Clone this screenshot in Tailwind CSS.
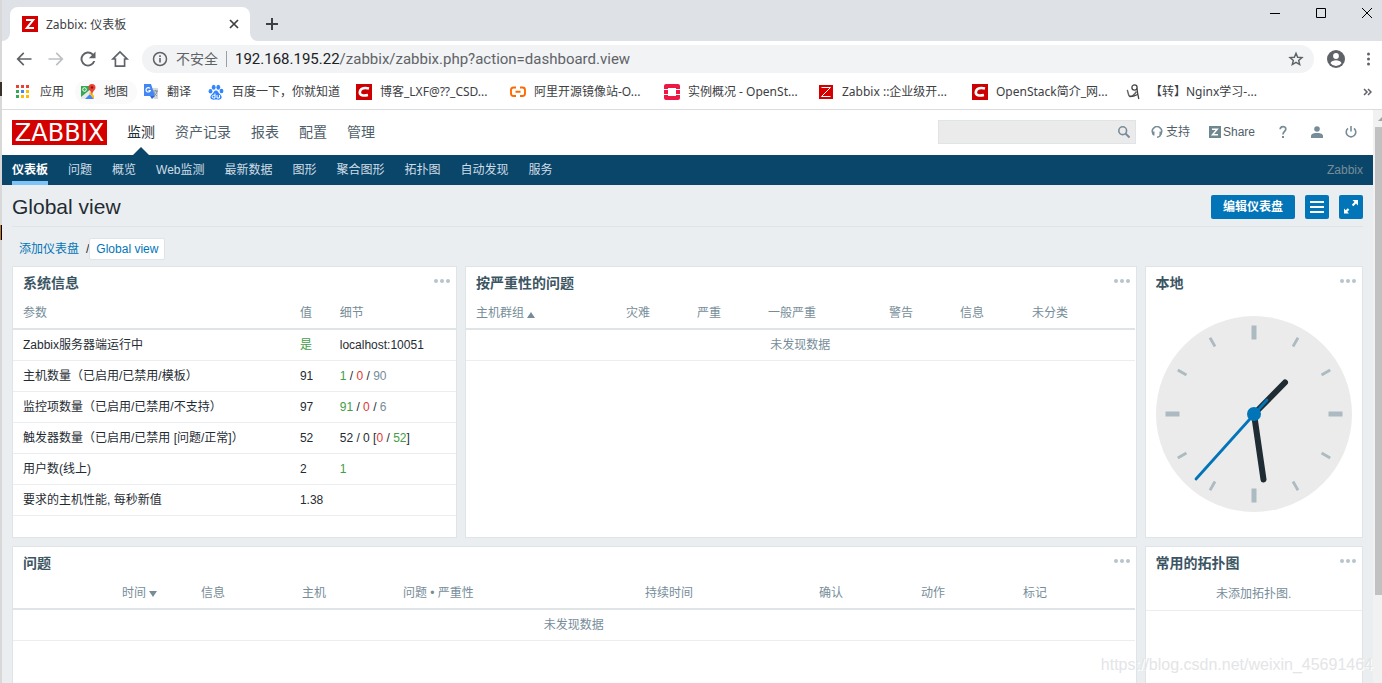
<!DOCTYPE html>
<html lang="zh-CN">
<head>
<meta charset="utf-8">
<meta name="viewport" content="width=device-width, initial-scale=1">
<title>Zabbix: 仪表板</title>
<script src="https://cdn.jsdelivr.net/npm/@tailwindcss/browser@4"></script>
</head>
<body class="relative flex h-screen overflow-hidden bg-white font-['Liberation_Sans','Noto_Sans_CJK_SC',sans-serif] text-xs text-[#1f2c33]">
<div class="relative w-[2px] shrink-0 bg-[#d8d8d8]">
  <span class="absolute top-[82px] left-0 h-[14px] w-[2px] bg-[#3a3128]"></span>
  <span class="absolute top-[225px] left-0 h-[15px] w-[2px] border-r border-black bg-[#c07a2c]"></span>
</div>
<div class="flex min-w-0 flex-1 flex-col">

  <!-- Browser window -->
  <section class="shrink-0 font-['Noto_Sans','Noto_Sans_CJK_SC',sans-serif] text-[#3c4043]">
    <div class="flex h-[41px] items-end bg-[#dee1e6]">
      <div class="flex h-8 w-2 items-end bg-white"><span class="h-full w-full rounded-br-lg bg-[#dee1e6]"></span></div>
      <div class="flex h-[34px] w-60 items-center rounded-t-lg bg-white pr-[10px] pl-3">
        <svg class="size-4" viewBox="0 0 16 16"><path fill="#d40000" d="M0 0h16v16H0z"/><path d="M4 4h7.200L4.800 12H12" fill="none" stroke="#fff" stroke-width="2"/></svg>
        <span class="ml-2 flex-1 pt-px">Zabbix: 仪表板</span>
        <button aria-label="关闭标签页" class="flex size-3 items-center justify-center"><svg class="size-[10px]" viewBox="0 0 10 10"><path d="M1 1l8 8M9 1L1 9" stroke="#3c4043" stroke-width="1.700"/></svg></button>
      </div>
      <div class="flex h-8 w-2 bg-white"><span class="h-full w-full rounded-bl-lg bg-[#dee1e6]"></span></div>
      <button aria-label="新标签页" class="mb-[11px] ml-2 size-3"><svg class="size-3" viewBox="0 0 12 12"><path d="M6 0v12M0 6h12" stroke="#3c4043" stroke-width="2"/></svg></button>
      <div class="mb-[23px] ml-auto flex items-center gap-9 pr-[10px]">
        <button aria-label="最小化"><svg class="size-[10px]" viewBox="0 0 10 10"><path d="M0 5.500h10" stroke="#000"/></svg></button>
        <button aria-label="最大化"><svg class="size-[10px]" viewBox="0 0 10 10"><path d="M.5.5h9v9h-9z" fill="none" stroke="#000"/></svg></button>
        <button aria-label="关闭"><svg class="size-[10px]" viewBox="0 0 10 10"><path d="M0 0l10 10M10 0L0 10" stroke="#000"/></svg></button>
      </div>
    </div>
    <div class="flex h-9 items-center pl-3">
      <div class="flex gap-3 text-[#5f6368]">
        <button aria-label="后退"><svg class="size-5" viewBox="0 0 24 24"><path fill="currentColor" d="M21 11H6.800l5.600-5.600L11 4l-8 8 8 8 1.400-1.400L6.800 13H21z"/></svg></button>
        <button aria-label="前进" class="text-[#bdc0c3]"><svg class="size-5" viewBox="0 0 24 24"><path fill="currentColor" d="M3 11h14.200l-5.600-5.600L13 4l8 8-8 8-1.400-1.400 5.600-5.600H3z"/></svg></button>
        <button aria-label="重新加载"><svg class="size-5" viewBox="0 0 24 24"><path fill="currentColor" d="M18.400 5.600A9 9 0 1 0 20.700 14.500h-2.400a6.700 6.700 0 1 1-1.500-7.200L13 11h8V3z"/></svg></button>
        <button aria-label="主页"><svg class="size-5" viewBox="0 0 24 24"><path d="M12 3.500L3.500 12H6.500v8.500h11V12h3z" fill="none" stroke="currentColor" stroke-width="2"/></svg></button>
      </div>
      <div class="ml-3 flex h-7 flex-1 items-center rounded-full bg-[#f1f3f4] px-[10px] text-sm text-[#5f6368]">
        <svg class="size-4" viewBox="0 0 16 16"><circle cx="8" cy="8" r="6.500" fill="none" stroke="#5f6368" stroke-width="1.500"/><path d="M8 7v4.500M8 4.300v1.600" stroke="#5f6368" stroke-width="1.600"/></svg>
        <span class="ml-2">不安全</span>
        <span class="mx-2 h-4 w-px bg-[#9aa0a6]"></span>
        <span class="relative flex-1 font-[Roboto,sans-serif] text-[15px] leading-5 whitespace-nowrap"><span class="text-[#202124]">192.168.195.22</span>/zabbix/zabbix.php?action=dashboard.view<input aria-label="地址" class="absolute inset-0 w-full opacity-0"></span>
        <button aria-label="收藏"><svg class="size-4" viewBox="0 0 24 24"><path d="M12 3.500l2.500 5.900 6.400.5-4.900 4.200 1.500 6.200L12 17l-5.500 3.300L8 14.100 3.100 9.900l6.400-.5z" fill="none" stroke="#5f6368" stroke-width="2.200"/></svg></button>
      </div>
      <button aria-label="用户" class="ml-[13px]"><svg class="size-[18px]" viewBox="0 0 18 18"><circle cx="9" cy="9" r="9" fill="#5f6368"/><circle cx="9" cy="6" r="2.900" fill="#fff"/><path d="M3.500 13.200c.6-2 3.300-2.900 5.500-2.900s4.900.9 5.500 2.900A6.800 6.800 0 0 1 9 16a6.800 6.800 0 0 1-5.500-2.800z" fill="#fff"/></svg></button>
      <button aria-label="菜单" class="ml-[22px] pr-3"><svg class="h-4 w-[3px]" viewBox="0 0 3 16"><g fill="#5f6368"><circle cx="1.500" cy="3" r="1.500"/><circle cx="1.500" cy="8" r="1.500"/><circle cx="1.500" cy="13" r="1.500"/></g></svg></button>
    </div>
    <nav class="flex h-[33px] items-center border-b border-[#dadce0] pb-[3px] text-xs whitespace-nowrap">
      <a href="#" class="flex w-[73px] items-center gap-[10px] pl-[14px]"><svg class="size-[14px]" viewBox="0 0 14 14"><path fill="#ea4335" d="M0 0h3v3H0zM5 0h3v3H5zM10 0h3v3h-3z"/><path fill="#34a853" d="M0 5h3v3H0zM0 10h3v3H0z"/><path fill="#4285f4" d="M5 5h3v3H5z"/><path fill="#fbbc05" d="M10 5h3v3h-3zM5 10h3v3H5zM10 10h3v3h-3z"/></svg>应用</a>
      <a href="#" class="flex w-[62px] items-center gap-2 rounded-full bg-[#fafafa] py-1 pl-[5px]"><svg class="size-4" viewBox="0 0 16 16"><path fill="#34a853" d="M1 2h9v6l-9 7z"/><path fill="#4285f4" d="M1 15l7-7 6 7z"/><path fill="#e8eaed" d="M1 13L12 4l2 2-9 9H1z"/><path fill="#fbbc05" d="M9 9l2-1 3 4v3z"/><circle cx="4.500" cy="5.500" r="1.800" fill="none" stroke="#fff"/><path fill="#ea4335" d="M12 0a3.500 3.500 0 0 1 3.500 3.500C15.500 6 12.500 7 12 11c-.5-4-3.500-5-3.500-7.500A3.500 3.500 0 0 1 12 0z"/><circle cx="12" cy="3.500" r="1.200" fill="#811"/></svg>地图</a>
      <a href="#" class="flex w-[65px] items-center gap-2 pl-[6px]"><svg class="size-4" viewBox="0 0 16 16"><path fill="#d5d8dc" d="M6 4h9v11h-4z"/><path fill="#4285f4" d="M1 0h7l4 12H1z"/><path fill="#3367d6" d="M7 12h5l-3 3z"/><path d="M7 4.500A2.200 2.200 0 1 0 7.300 6.500H5.500" fill="none" stroke="#fff" stroke-width="1.200"/><path d="M10 7h5M12.500 6v1M14 7c-.5 3-2 4-3 5M11 8c.5 2 2 3.500 3 4" fill="none" stroke="#78909c"/></svg>翻译</a>
      <a href="#" class="flex w-[148px] items-center gap-2 pl-[6px]"><svg class="size-4 shrink-0" viewBox="0 0 16 16"><g fill="#3385ff"><ellipse cx="2.500" cy="7.300" rx="1.900" ry="2.300"/><ellipse cx="5.700" cy="3.200" rx="1.900" ry="2.500"/><ellipse cx="10.300" cy="3.200" rx="1.900" ry="2.500"/><ellipse cx="13.500" cy="7" rx="1.900" ry="2.300"/><path d="M8 6.500c2 0 2.300 2 3.500 3.200 1.500 1.300 2.500 2.300 2 4.300-.6 2-3 1.700-5.500 1.500-2.500.2-5 .5-5.500-1.500s.5-3 2-4.300C5.700 8.500 6 6.500 8 6.500z"/></g><path d="M7 9.500V14H5.500a1.300 1.300 0 0 1 0-2.700H7M9 11v3h2.500v-3" fill="none" stroke="#fff"/></svg>百度一下，你就知道</a>
      <a href="#" class="flex w-[154px] items-center gap-2 pl-[6px]"><svg class="size-4 shrink-0" viewBox="0 0 16 16"><path fill="#c00" d="M0 0h16v16H0z"/><path d="M13 4.500C7 3 4 5 3.800 8.500c0 3 3.500 3.500 8.200 2.500" fill="none" stroke="#fff" stroke-width="2.600"/></svg>博客_LXF@??_CSD...</a>
      <a href="#" class="flex w-[154px] items-center gap-2 pl-[6px]"><svg class="size-4 shrink-0" viewBox="0 0 16 16"><path d="M6 3.500H3.500Q1 3.500 1 6v3.500Q1 12 3.500 12H6M10 3.500h2.500Q15 3.500 15 6v3.500Q15 12 12.500 12H10M5.500 7.800h5" fill="none" stroke="#ff6a00" stroke-width="1.900"/></svg>阿里开源镜像站-O...</a>
      <a href="#" class="flex w-[154px] items-center gap-2 pl-[6px]"><svg class="size-4 shrink-0" viewBox="0 0 16 16"><path fill="#ed1944" d="M2 0h12q2 0 2 2v3h-4V4H4v1H0V2q0-2 2-2zM0 6h4v4H0zM12 6h4v4h-4zM0 11h4v1h8v-1h4v3q0 2-2 2H2q-2 0-2-2z"/></svg>实例概况 - OpenSt...</a>
      <a href="#" class="flex w-[154px] items-center gap-2 pl-[6px]"><svg class="size-4 shrink-0" viewBox="0 0 16 16"><path fill="#d40000" d="M1 1h14v14H1z"/><path d="M3.500 3.500h9l-9 9h9" fill="none" stroke="#fff"/></svg>Zabbix ::企业级开...</a>
      <a href="#" class="flex w-[154px] items-center gap-2 pl-[6px]"><svg class="size-4 shrink-0" viewBox="0 0 16 16"><path fill="#c00" d="M0 0h16v16H0z"/><path d="M13 4.500C7 3 4 5 3.800 8.500c0 3 3.500 3.500 8.200 2.500" fill="none" stroke="#fff" stroke-width="2.600"/></svg>OpenStack简介_网...</a>
      <a href="#" class="flex items-center gap-2 pl-[6px]"><svg class="size-4 shrink-0" viewBox="0 0 16 16"><path d="M1 6c1.500 1 .5 5.500 3 6.500 2.500.5 4.500-2 6.500-5" fill="none" stroke="#666" stroke-width="1.500"/><circle cx="8.500" cy="3.500" r="2.600" fill="none" stroke="#444" stroke-width="1.300"/><path d="M11 4.500c.3 4 1 7 1.800 10.500M3.500 12c3 1.500 5.500-.5 8-1.500" fill="none" stroke="#444" stroke-width="1.300"/></svg>【转】Nginx学习-...</a>
      <button aria-label="更多书签" class="ml-auto pr-[10px]"><svg class="h-2 w-[9px]" viewBox="0 0 9 8"><path d="M1 1l3 3-3 3M5 1l3 3-3 3" fill="none" stroke="#5f6368" stroke-width="1.500"/></svg></button>
    </nav>
  </section>

  <div class="flex min-h-0 flex-1">
    <div class="flex min-w-0 flex-1 flex-col bg-[#ebeef0]">
      <!-- Main menu -->
      <header class="flex h-[45px] shrink-0 items-center bg-white px-[10px] pb-px">
        <a href="#" class="flex h-[25px] w-[95px] items-center justify-center bg-[#d40000] pt-px font-['DejaVu_Sans',sans-serif] text-[24px] leading-none text-white">ZABBIX</a>
        <nav class="ml-5 flex gap-5 text-sm text-[#50606a]">
          <a href="#" class="relative text-[#1f2c33]">监测<svg class="absolute top-[25px] left-[6px] h-2 w-4" viewBox="0 0 16 8"><path fill="#0a466a" d="M0 8l8-8 8 8z"/></svg></a>
          <a href="#">资产记录</a><a href="#">报表</a><a href="#">配置</a><a href="#">管理</a>
        </nav>
        <form class="relative ml-auto">
          <input aria-label="搜索" class="block h-6 w-[198px] border border-[#dfe4e7] bg-[#ebebeb] px-2 outline-none">
          <button type="button" aria-label="搜索" class="absolute top-[5px] right-[5px]"><svg class="size-[14px]" viewBox="0 0 14 14"><circle cx="5.700" cy="5.700" r="3.900" fill="none" stroke="#768d99" stroke-width="1.600"/><path d="M8.500 8.500l4 4" stroke="#768d99" stroke-width="2"/></svg></button>
        </form>
        <div class="flex items-center pl-[15px] text-xs text-[#50606a]">
          <a href="#" class="flex items-center gap-[3px]"><svg class="size-3" viewBox="0 0 12 12"><path d="M2.300 8A4.600 4.600 0 1 1 9.700 8Q9.500 11 6 11.200" fill="none" stroke="#768d99" stroke-width="1.500"/><path fill="#768d99" d="M1 5.500h2.500v4H2.300L1 8zM8.500 5.500H11V8L9.700 9.500H8.500z"/></svg>支持</a>
          <a href="#" class="ml-[19px] flex items-center gap-[2px]"><svg class="size-3" viewBox="0 0 12 12"><path fill="#6f8791" d="M0 0h12v12H0z"/><path d="M3 3.200h5.200L3.500 8.800H9" fill="none" stroke="#fff" stroke-width="1.500"/></svg>Share</a>
          <a href="#" aria-label="帮助" class="ml-6"><svg class="h-[14px] w-2" viewBox="0 0 8 14"><path d="M1.200 4.300C1.200 .7 6.800.7 6.800 4.100 6.800 6.300 4 6.500 4 9.500" fill="none" stroke="#768d99" stroke-width="1.700"/><path fill="#768d99" d="M3 11h2v2H3z"/></svg></a>
          <a href="#" aria-label="用户资料" class="ml-6"><svg class="size-3" viewBox="0 0 12 12"><circle cx="6" cy="3" r="2.800" fill="#768d99"/><path fill="#768d99" d="M0 12V10q0-2.500 4-3h4q4 .5 4 3v2z"/></svg></a>
          <a href="#" aria-label="登出" class="mr-[6px] ml-[22px]"><svg class="size-3" viewBox="0 0 12 12"><path d="M3 2.300a4.800 4.800 0 1 0 6 0M6 0v5.500" fill="none" stroke="#768d99" stroke-width="1.600"/></svg></a>
        </div>
      </header>
      <nav class="flex h-[30px] shrink-0 gap-5 bg-[#0a466a] px-[10px] text-xs leading-[30px] text-[#cfdde6]">
        <a href="#" class="border-b-4 border-[#7cc4f8] font-bold text-white">仪表板</a>
        <a href="#">问题</a><a href="#">概览</a><a href="#">Web监测</a><a href="#">最新数据</a><a href="#">图形</a><a href="#">聚合图形</a><a href="#">拓扑图</a><a href="#">自动发现</a><a href="#">服务</a>
        <span class="ml-auto text-[#768d99]">Zabbix</span>
      </nav>

      <main class="flex min-h-0 flex-1 flex-col px-[10px]">
        <div class="flex h-[42px] shrink-0 items-center border-b border-[#dfe4e7] pt-[3px]">
          <h1 class="flex-1 text-[21px] leading-6">Global view</h1>
          <button class="h-6 w-[84px] rounded-xs bg-[#0275b8] text-xs font-bold text-white">编辑仪表盘</button>
          <button aria-label="操作" class="ml-[10px] flex size-6 items-center justify-center rounded-xs bg-[#0275b8]"><svg class="size-[14px]" viewBox="0 0 14 14"><path d="M0 2h14M0 7h14M0 12h14" stroke="#fff" stroke-width="2"/></svg></button>
          <button aria-label="全屏" class="ml-[10px] flex size-6 items-center justify-center rounded-xs bg-[#0275b8]"><svg class="size-[14px]" viewBox="0 0 14 14"><path fill="#fff" d="M8.500 0H14v5.500l-2-2-2.700 2.700-1.500-1.500L10.500 2zM0 8.500l1.700 1.700 2-2 1.600 1.600-2 2L5 13.500H0z"/></svg></button>
        </div>
        <div class="flex h-[39px] shrink-0 items-center pt-1 pl-[7px] text-xs text-[#0275b8]">
          <a href="#">添加仪表盘</a><span class="ml-[7px] text-[#1f2c33]">/</span>
          <a href="#" class="flex h-[22px] items-center rounded-xs border border-[#dfe4e7] bg-white px-[6px]">Global view</a>
        </div>

        <div class="grid min-h-0 flex-1 grid-cols-12 grid-rows-[272px_1fr] gap-2">
          <section class="relative col-span-4 border border-[#dfe4e7] bg-white">
            <h4 class="h-[31px] px-[10px] text-sm leading-8 font-bold text-[#3c5563]">系统信息</h4>
            <button aria-label="操作" class="absolute top-3 right-[6px]"><svg class="h-1 w-4" viewBox="0 0 16 4"><g fill="#b8c5cb"><circle cx="2" cy="2" r="2"/><circle cx="8" cy="2" r="2"/><circle cx="14" cy="2" r="2"/></g></svg></button>
            <table class="w-full table-fixed border-collapse text-left leading-[30px] [&_td]:border-b [&_td]:border-[#ebeef0] [&_td]:py-0 [&_td]:pl-[10px] [&_th]:border-b-2 [&_th]:border-[#dfe4e7] [&_th]:pl-[10px] [&_th]:font-normal [&_th]:text-[#768d99] [&_tr]:h-[31px]">
              <thead><tr><th class="w-[62.5%]">参数</th><th class="w-[9%]">值</th><th>细节</th></tr></thead>
              <tbody>
                <tr><td>Zabbix服务器端运行中</td><td class="text-[#429e47]">是</td><td>localhost:10051</td></tr>
                <tr><td>主机数量（已启用/已禁用/模板）</td><td>91</td><td><span class="text-[#429e47]">1</span> / <span class="text-[#e33734]">0</span> / <span class="text-[#768d99]">90</span></td></tr>
                <tr><td>监控项数量（已启用/已禁用/不支持）</td><td>97</td><td><span class="text-[#429e47]">91</span> / <span class="text-[#e33734]">0</span> / <span class="text-[#768d99]">6</span></td></tr>
                <tr><td>触发器数量（已启用/已禁用 [问题/正常]）</td><td>52</td><td>52 / 0 [<span class="text-[#e33734]">0</span> / <span class="text-[#429e47]">52</span>]</td></tr>
                <tr><td>用户数(线上)</td><td>2</td><td class="text-[#429e47]">1</td></tr>
                <tr><td>要求的主机性能, 每秒新值</td><td>1.38</td><td></td></tr>
              </tbody>
            </table>
          </section>

          <section class="relative col-span-6 border border-[#dfe4e7] bg-white pr-px">
            <h4 class="h-[31px] px-[10px] text-sm leading-8 font-bold text-[#3c5563]">按严重性的问题</h4>
            <button aria-label="操作" class="absolute top-3 right-[6px]"><svg class="h-1 w-4" viewBox="0 0 16 4"><g fill="#b8c5cb"><circle cx="2" cy="2" r="2"/><circle cx="8" cy="2" r="2"/><circle cx="14" cy="2" r="2"/></g></svg></button>
            <table class="w-full table-fixed border-collapse text-left leading-[30px] text-[#768d99] [&_td]:border-b [&_td]:border-[#ebeef0] [&_th]:border-b-2 [&_th]:border-[#dfe4e7] [&_th]:pl-[10px] [&_th]:font-normal [&_tr]:h-[31px]">
              <thead><tr>
                <th class="w-[150px]"><a href="#" class="inline-flex items-center gap-[3px]">主机群组<svg class="mt-[3px] h-[6px] w-2" viewBox="0 0 8 6"><path fill="#768d99" d="M0 6l4-6 4 6z"/></svg></a></th>
                <th class="w-[71px]">灾难</th><th class="w-[71px]">严重</th><th class="w-[121px]">一般严重</th><th class="w-[71px]">警告</th><th class="w-[72px]">信息</th><th>未分类</th>
              </tr></thead>
              <tbody><tr><td colspan="7" class="text-center">未发现数据</td></tr></tbody>
            </table>
          </section>

          <section class="relative col-span-2 border border-[#dfe4e7] bg-white">
            <h4 class="h-8 px-[10px] text-sm leading-8 font-bold text-[#3c5563]">本地</h4>
            <button aria-label="操作" class="absolute top-3 right-[6px]"><svg class="h-1 w-4" viewBox="0 0 16 4"><g fill="#b8c5cb"><circle cx="2" cy="2" r="2"/><circle cx="8" cy="2" r="2"/><circle cx="14" cy="2" r="2"/></g></svg></button>
            <svg class="mx-auto mt-[17px] size-[196px]" viewBox="-98 -98 196 196">
              <circle r="98" fill="#ebebeb"/>
              <g stroke="#acbbc2">
                <path stroke-width="5" d="M0-88.500v14M0 88.500v-14M-88.500 0h14M88.500 0h-14"/>
                <g stroke-width="2.800"><path d="M0-88v10" transform="rotate(30)"/><path d="M0-88v10" transform="rotate(60)"/><path d="M0-88v10" transform="rotate(120)"/><path d="M0-88v10" transform="rotate(150)"/><path d="M0-88v10" transform="rotate(210)"/><path d="M0-88v10" transform="rotate(240)"/><path d="M0-88v10" transform="rotate(300)"/><path d="M0-88v10" transform="rotate(330)"/></g>
              </g>
              <path d="M0 0l31-31.500M0 0l9.500 65.500" stroke="#1f2c33" stroke-width="6" stroke-linecap="round"/>
              <path d="M13-14L-58 65" stroke="#0275b8" stroke-width="2.800" stroke-linecap="round"/>
              <circle r="7" fill="#0275b8"/>
            </svg>
          </section>

          <section class="relative col-span-10 border border-b-0 border-[#dfe4e7] bg-white pr-px">
            <h4 class="h-[31px] px-[10px] text-sm leading-8 font-bold text-[#3c5563]">问题</h4>
            <button aria-label="操作" class="absolute top-3 right-[6px]"><svg class="h-1 w-4" viewBox="0 0 16 4"><g fill="#b8c5cb"><circle cx="2" cy="2" r="2"/><circle cx="8" cy="2" r="2"/><circle cx="14" cy="2" r="2"/></g></svg></button>
            <table class="w-full table-fixed border-collapse text-left leading-[30px] text-[#768d99] [&_td]:border-b [&_td]:border-[#ebeef0] [&_th]:border-b-2 [&_th]:border-[#dfe4e7] [&_th]:pl-[10px] [&_th]:font-normal [&_tr]:h-[31px]">
              <thead><tr>
                <th class="w-[178px] pr-[34px] text-right"><a href="#" class="inline-flex items-center gap-[3px]">时间<svg class="mt-[2px] h-[6px] w-2" viewBox="0 0 8 6"><path fill="#768d99" d="M0 0l4 6 4-6z"/></svg></a></th>
                <th class="w-[101px]">信息</th><th class="w-[101px]">主机</th><th class="w-[242px]">问题 • 严重性</th><th class="w-[174px]">持续时间</th><th class="w-[102px]">确认</th><th class="w-[102px]">动作</th><th>标记</th>
              </tr></thead>
              <tbody><tr><td colspan="8" class="text-center">未发现数据</td></tr></tbody>
            </table>
          </section>

          <section class="relative col-span-2 border border-b-0 border-[#dfe4e7] bg-white">
            <h4 class="h-8 px-[10px] text-sm leading-8 font-bold text-[#3c5563]">常用的拓扑图</h4>
            <button aria-label="操作" class="absolute top-3 right-[6px]"><svg class="h-1 w-4" viewBox="0 0 16 4"><g fill="#b8c5cb"><circle cx="2" cy="2" r="2"/><circle cx="8" cy="2" r="2"/><circle cx="14" cy="2" r="2"/></g></svg></button>
            <p class="border-b border-[#ebeef0] text-center leading-[31px] text-[#768d99]">未添加拓扑图.</p>
          </section>
        </div>
      </main>
    </div>
    <div class="flex w-[9px] shrink-0 flex-col bg-[#f1f1f1] pl-[2px]">
      <svg class="h-[17px] w-[7px]" viewBox="0 0 7 17"><path fill="#a3a3a3" d="M3 11l4-4v4z"/></svg>
      <span class="h-[468px] bg-[#c1c1c1]"></span>
    </div>
  </div>
</div>
<span class="absolute right-[9px] bottom-2 text-base leading-5 text-[#e3e5e7] [text-shadow:1px_1px_0_#ffffff]">https://blog.csdn.net/weixin_45691464</span>
</body>
</html>
